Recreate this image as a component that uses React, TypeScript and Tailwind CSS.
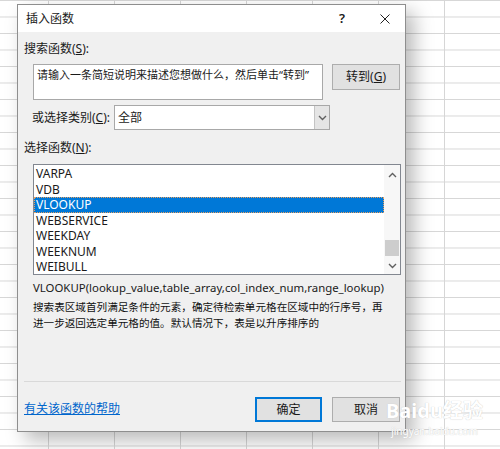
import React from 'react';

const funcs = ['VARPA', 'VDB', 'VLOOKUP', 'WEBSERVICE', 'WEEKDAY', 'WEEKNUM', 'WEIBULL'];

const ui = { fontFamily: '"Noto Sans", "Noto Sans CJK SC", sans-serif' };

function Chevron({ up }: { up?: boolean }) {
  return (
    <svg width="9" height="6" viewBox="0 0 9 6" className="block">
      <path
        d={up ? 'M1 5 L4.5 1.5 L8 5' : 'M1 1 L4.5 4.5 L8 1'}
        fill="none"
        stroke="#606060"
        strokeWidth="1.4"
      />
    </svg>
  );
}

export default function App() {
  return (
    <div
      className="relative h-[449px] w-[500px] overflow-hidden bg-white bg-[linear-gradient(to_right,#d6d6d6_1px,transparent_1px),linear-gradient(to_bottom,#d6d6d6_1px,transparent_1px)] bg-[size:66px_16.5px] bg-[position:48px_0px] pl-[17px] pt-[4px] text-[12px] text-[#1a1a1a]"
      style={ui}
    >
      <div className="flex h-[428px] w-[389px] flex-col border border-[#8e8e8e] bg-[#f0f0f0] shadow-[8px_8px_18px_rgba(0,0,0,0.28)]">
        {/* title bar */}
        <div className="flex h-[27px] items-center bg-white pl-[8px]">
          <span className="text-[12px]">插入函数</span>
          <span className="ml-auto mr-[35px] text-[13px] font-semibold">?</span>
          <svg width="10" height="10" viewBox="0 0 10 10" className="mr-[15px]">
            <path d="M0.5 0.5 L9.5 9.5 M9.5 0.5 L0.5 9.5" stroke="#222" strokeWidth="1" />
          </svg>
        </div>

        <div className="flex flex-1 flex-col pl-[6px] pr-[4px] pt-[9px]">
          <div className="h-[16px] leading-[16px]">
            搜索函数(<span className="underline">S</span>):
          </div>

          <div className="ml-[9px] mt-[7px] flex items-start gap-[9px]">
            <div className="h-[36px] w-[290px] whitespace-nowrap border border-[#a8a8a8] bg-white px-[3px] pt-[2px] text-[11px] leading-[16px]">
              请输入一条简短说明来描述您想做什么，然后单击“转到”
            </div>
            <div className="flex h-[26px] w-[68px] items-center justify-center border border-[#adadad] bg-[#e1e1e1]">
              转到(<span className="underline">G</span>)
            </div>
          </div>

          <div className="ml-[8px] mt-[5px] flex items-center">
            <span className="w-[82px]">
              或选择类别(<span className="underline">C</span>):
            </span>
            <div className="flex h-[25px] w-[216px] items-stretch border border-[#a8a8a8] bg-white">
              <span className="flex-1 pl-[3px] leading-[23px]">全部</span>
              <div className="flex w-[15px] items-center justify-center border-l border-[#c4c4c4] bg-[#e5e5e5]">
                <Chevron />
              </div>
            </div>
          </div>

          <div className="mt-[10px] h-[16px] leading-[16px]">
            选择函数(<span className="underline">N</span>):
          </div>

          <div className="ml-[9px] mt-[8px] flex h-[111px] w-[368px] border border-[#828790] bg-white">
            <div className="flex-1 pt-[1px]">
              {funcs.map((f) => (
                <div
                  key={f}
                  className={
                    f === 'VLOOKUP'
                      ? 'h-[15.5px] border border-dotted border-[#e8a060] bg-[#0078d7] pl-[1px] leading-[13.5px] text-white'
                      : 'h-[15.5px] pl-[2px] leading-[15.5px]'
                  }
                >
                  {f}
                </div>
              ))}
            </div>
            <div className="flex w-[16px] flex-col items-center bg-[#f7f7f7] pt-[7px] pb-[5px]">
              <Chevron up />
              <div className="mt-auto mb-[7px] h-[16px] w-[14px] bg-[#cdcdcd]" />
              <Chevron />
            </div>
          </div>

          <div className="ml-[9px] mt-[5px] h-[16px] text-[11.4px] leading-[16px]">
            VLOOKUP(lookup_value,table_array,col_index_num,range_lookup)
          </div>
          <div className="ml-[9px] mt-[3px] text-[10.6px] leading-[16px] text-[#111]">
            <div>搜索表区域首列满足条件的元素，确定待检索单元格在区域中的行序号，再</div>
            <div>进一步返回选定单元格的值。默认情况下，表是以升序排序的</div>
          </div>

          <div className="mt-[50px] h-px w-[377px] bg-[#d9d9d9]" />

          <div className="mt-[15px] flex items-start">
            <span className="mt-[3px] text-[#0066cc] underline">有关该函数的帮助</span>
            <div className="ml-auto flex gap-[10px] pr-[1px]">
              <div className="flex h-[25px] w-[67px] items-center justify-center border-2 border-[#0078d7] bg-[#e1e1e1]">
                确定
              </div>
              <div className="flex h-[25px] w-[68px] items-center justify-center border border-[#adadad] bg-[#e1e1e1]">
                取消
              </div>
            </div>
          </div>
        </div>
      </div>

      <div className="absolute left-[386px] top-[400px] flex flex-col items-center whitespace-nowrap">
        <span className="text-[20px] font-bold leading-[22px] text-white [text-shadow:0_0_1px_#bbb]">
          Baidu经验
        </span>
        <span className="mt-[3px] text-[10px] leading-[12px] text-white [text-shadow:0_0_1px_#bbb]">
          jingyan.baidu.com
        </span>
      </div>
    </div>
  );
}
